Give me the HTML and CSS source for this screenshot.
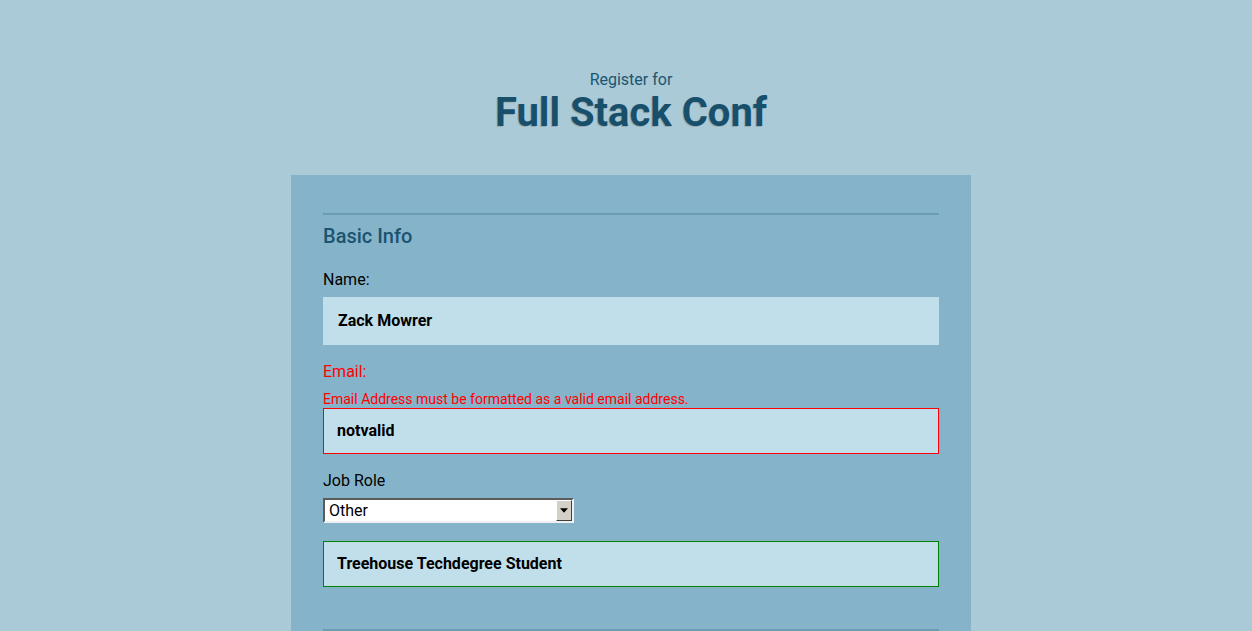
FILE: index.html
```html
<!DOCTYPE html>
<html lang="en">
<head>
<meta charset="utf-8">
<title>Register for Full Stack Conf</title>
<link rel="stylesheet" href="styles.css">
</head>
<body>
<header class="header">
  <p class="pre">Register for</p>
  <h1 class="title">Full Stack Conf</h1>
</header>
<form class="form">
  <section class="fieldset">
    <h2 class="legend">Basic Info</h2>
    <label class="label" for="name">Name:</label>
    <input class="field field-plain" id="name" type="text" value="Zack Mowrer">
    <label class="label label-error" for="mail">Email:</label>
    <p class="error-msg">Email Address must be formatted as a valid email address.</p>
    <input class="field field-error" id="mail" type="text" value="notvalid">
    <label class="label label-job" for="title">Job Role</label>
    <div class="select-wrap">
      <select class="select" id="title">
        <option>Other</option>
      </select>
      <span class="select-btn"><svg width="7" height="4" viewBox="0 0 7 4"><path d="M0 0h7L3.5 4z" fill="#000"/></svg></span>
    </div>
    <input class="field field-valid" type="text" value="Treehouse Techdegree Student">
  </section>
  <section class="fieldset fieldset-next"></section>
</form>
</body>
</html>
```
FILE: styles.css
```css
* { box-sizing: border-box; }
html, body { margin: 0; padding: 0; }
body {
  background: #aacad7;
  font-family: Roboto, "Noto Sans", sans-serif;
  color: #000;
  height: 631px;
  overflow: hidden;
  padding-left: 10px;
}
.header {
  text-align: center;
  padding-top: 71px;
}
.pre {
  margin: 0;
  font-size: 16px;
  line-height: 18px;
  color: #1d5571;
}
.title {
  margin: 0;
  font-size: 40px;
  line-height: 48px;
  font-weight: 700;
  color: #184f6a;
  text-shadow: -1px 1px 0 rgba(90, 80, 60, 0.25);
}
.form {
  width: 680px;
  margin: 38px auto 0;
  background: #85b4ca;
  padding: 38px 32px 0;
}
.fieldset {
  border-top: 2px solid #6a9db4;
  display: flex;
  flex-direction: column;
  align-items: flex-start;
}
.legend {
  margin: 9px 0 0;
  font-size: 20px;
  line-height: 24px;
  font-weight: 500;
  color: #1b5370;
}
.label {
  margin-top: 22px;
  font-size: 16px;
  line-height: 19px;
}
.label-error {
  margin-top: 17px;
  color: #ff0000;
}
.label-job { margin-top: 17px; }
.error-msg {
  margin: 10px 0 0;
  font-size: 14px;
  line-height: 16px;
  color: #ff0000;
}
.field {
  width: 100%;
  margin-top: 8px;
  height: 48px;
  background: #c1dfea;
  border: 2px solid #c1dfea;
  padding: 0 13px 2px;
  font-family: Roboto, "Noto Sans", sans-serif;
  font-size: 16px;
  font-weight: 700;
  color: #000;
  outline: none;
}
.field-error {
  margin-top: 1px;
  height: 46px;
  border: 1px solid #ff0000;
}
.field-valid {
  margin-top: 18px;
  height: 46px;
  border: 1px solid #008000;
}
.select-wrap {
  position: relative;
  width: 251px;
  height: 25px;
  margin-top: 8px;
}
.select {
  -webkit-appearance: none;
  appearance: none;
  width: 100%;
  height: 25px;
  margin: 0;
  background: #fff;
  border: 2px solid;
  border-color: #5b5b5b #f0f0f0 #f0f0f0 #5b5b5b;
  border-radius: 0;
  padding: 0 0 0 4px;
  font-family: Roboto, "Noto Sans", sans-serif;
  font-size: 16px;
  color: #000;
  outline: none;
}
.select-btn {
  position: absolute;
  top: 2px;
  right: 2px;
  width: 16px;
  height: 21px;
  background: #d4d0c8;
  border: 1px solid;
  border-color: #ffffff #404040 #404040 #ffffff;
  display: flex;
  align-items: center;
  justify-content: center;
}
.select-btn svg { width: 8px; height: 5px; }
.fieldset-next {
  margin-top: 42px;
  height: 10px;
}
```
